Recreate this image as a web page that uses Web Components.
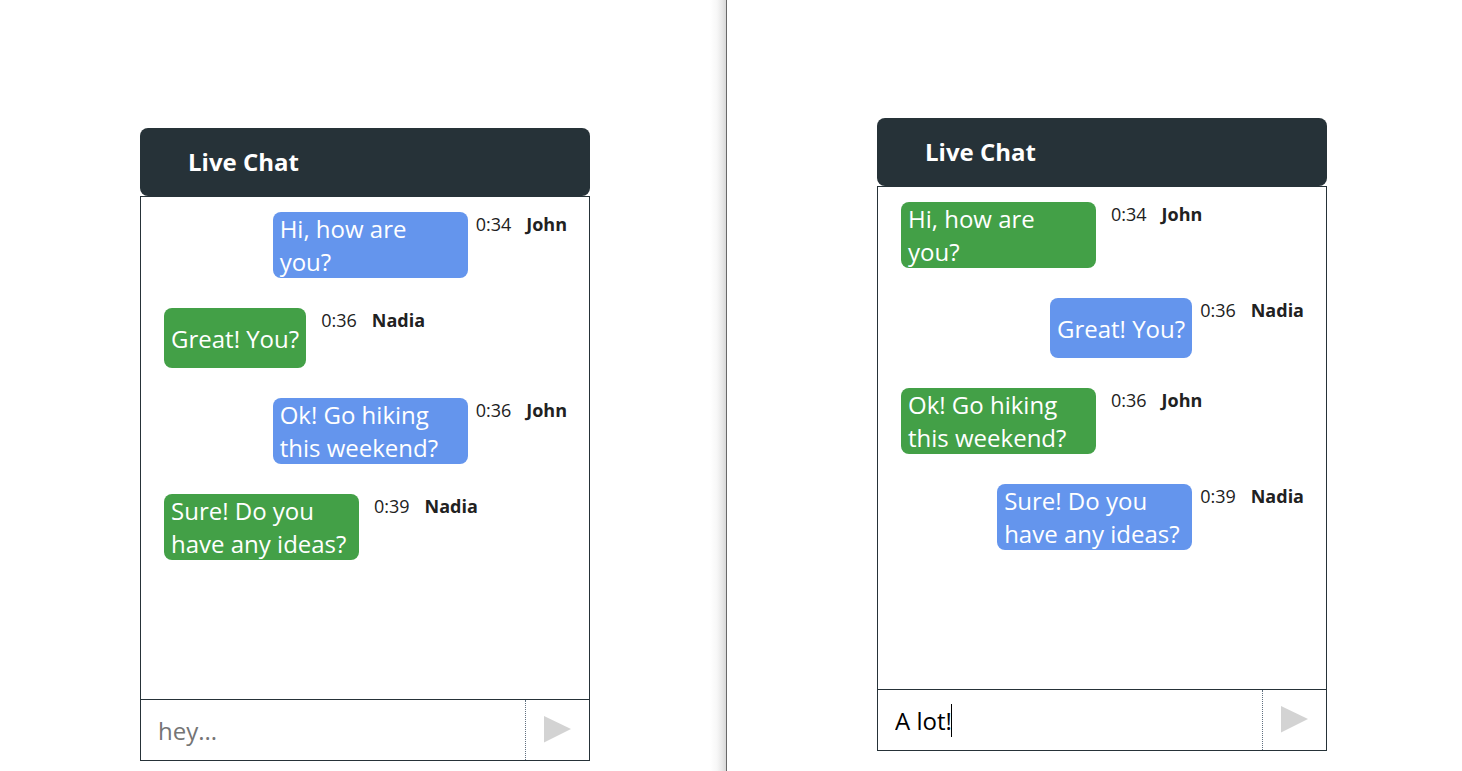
<!DOCTYPE html>
<html lang="en">
<head>
<meta charset="utf-8">
<title>Live Chat</title>
<style>
  body { margin: 0; background: #fff; color: #212121; font-family: "Open Sans", "Noto Sans", sans-serif; }
</style>
</head>
<body>
<split-view>
  <chat-window slot="left" placeholder="hey...">
    <chat-message mine time="0:34" author="John">Hi, how are you?</chat-message>
    <chat-message time="0:36" author="Nadia">Great! You?</chat-message>
    <chat-message mine time="0:36" author="John">Ok! Go hiking this weekend?</chat-message>
    <chat-message time="0:39" author="Nadia">Sure! Do you have any ideas?</chat-message>
  </chat-window>
  <chat-window slot="right" placeholder="hey..." draft="A lot!">
    <chat-message time="0:34" author="John">Hi, how are you?</chat-message>
    <chat-message mine time="0:36" author="Nadia">Great! You?</chat-message>
    <chat-message time="0:36" author="John">Ok! Go hiking this weekend?</chat-message>
    <chat-message mine time="0:39" author="Nadia">Sure! Do you have any ideas?</chat-message>
  </chat-window>
</split-view>

<template id="split-view">
  <style>
    :host { display: grid; grid-template-columns: 727fr 735fr; min-height: 100vh; }
    .pane { display: flex; justify-content: center; align-items: flex-start; box-sizing: border-box; }
    .left {
      padding: 128px 0 10px 4px;
      border-right: 1px solid #686868;
      background: linear-gradient(to left, #d8d8d8, #e8e8e8 4px, #f7f7f7 9px, #fff 16px);
    }
    .right { padding: 118px 0 20px 15px; }
  </style>
  <div class="pane left"><slot name="left"></slot></div>
  <div class="pane right"><slot name="right"></slot></div>
</template>

<template id="chat-window">
  <style>
    :host { display: block; width: 100%; max-width: 450px; }
    header { padding: 16px 48px; background: #263238; border-radius: 8px; color: #fff; }
    h1 { margin: 0; font-size: 24px; line-height: 36px; font-weight: 700; }
    main { display: flex; flex-direction: column; gap: 30px; box-sizing: border-box; min-height: 503px;
           padding: 15px 22px 15px 23px; border: 1px solid #263238; border-bottom: 0; }
    form { display: flex; height: 60px; margin: 0; border: 1px solid #263238; }
    .field { flex: 1; min-width: 0; display: flex; align-items: center; padding-left: 17px; }
    input { flex: 1; min-width: 0; height: 60px; padding: 0; box-sizing: border-box; border: 0; outline: 0;
            background: none; font: 24px "Open Sans", "Noto Sans", sans-serif; color: #000; }
    input::placeholder { color: #757575; opacity: 1; }
    .caret { display: none; width: 1px; height: 33px; margin-left: -1px; background: #000; }
    :host([draft]) input { flex: none; field-sizing: content; }
    :host([draft]) .caret { display: block; }
    button { width: 64px; padding: 0; border: 0; border-left: 1px dotted #607080; background: none; color: #d3d3d3;
             display: flex; align-items: center; justify-content: center; }
    svg { display: block; }
  </style>
  <header><h1>Live Chat</h1></header>
  <main><slot></slot></main>
  <form>
    <div class="field"><input type="text" aria-label="Message"><span class="caret"></span></div>
    <button type="button" aria-label="Send"><svg width="27" height="28" viewBox="0 0 27 28"><path d="M0 0L27 13L0 26.500Z" fill="currentColor"/></svg></button>
  </form>
</template>

<template id="chat-message">
  <style>
    :host { display: flex; align-items: flex-start; gap: 15px; }
    :host([mine]) { justify-content: flex-end; gap: 8px; }
    .bubble { display: flex; align-items: center; box-sizing: border-box; min-height: 60px; max-width: 195px; padding: 0 7px;
              border-radius: 8px; background: #43a047; color: #fff; font-size: 24px; line-height: 33px; }
    :host([mine]) .bubble { background: #6495ed; }
    .meta { display: flex; gap: 15px; font-size: 18px; line-height: 25px; white-space: nowrap; }
    b { font-weight: 700; }
  </style>
  <div class="bubble"><span><slot></slot></span></div>
  <div class="meta"><time></time><b></b></div>
</template>

<script>
  class TemplateElement extends HTMLElement {
    constructor() {
      super();
      this.attachShadow({ mode: "open" })
        .append(document.getElementById(this.localName).content.cloneNode(true));
    }
  }

  customElements.define("split-view", class extends TemplateElement {});

  customElements.define("chat-window", class extends TemplateElement {
    connectedCallback() {
      const input = this.shadowRoot.querySelector("input");
      input.placeholder = this.getAttribute("placeholder") || "";
      input.value = this.getAttribute("draft") || "";
    }
  });

  customElements.define("chat-message", class extends TemplateElement {
    connectedCallback() {
      this.shadowRoot.querySelector("time").textContent = this.getAttribute("time");
      this.shadowRoot.querySelector("b").textContent = this.getAttribute("author");
    }
  });
</script>
</body>
</html>
